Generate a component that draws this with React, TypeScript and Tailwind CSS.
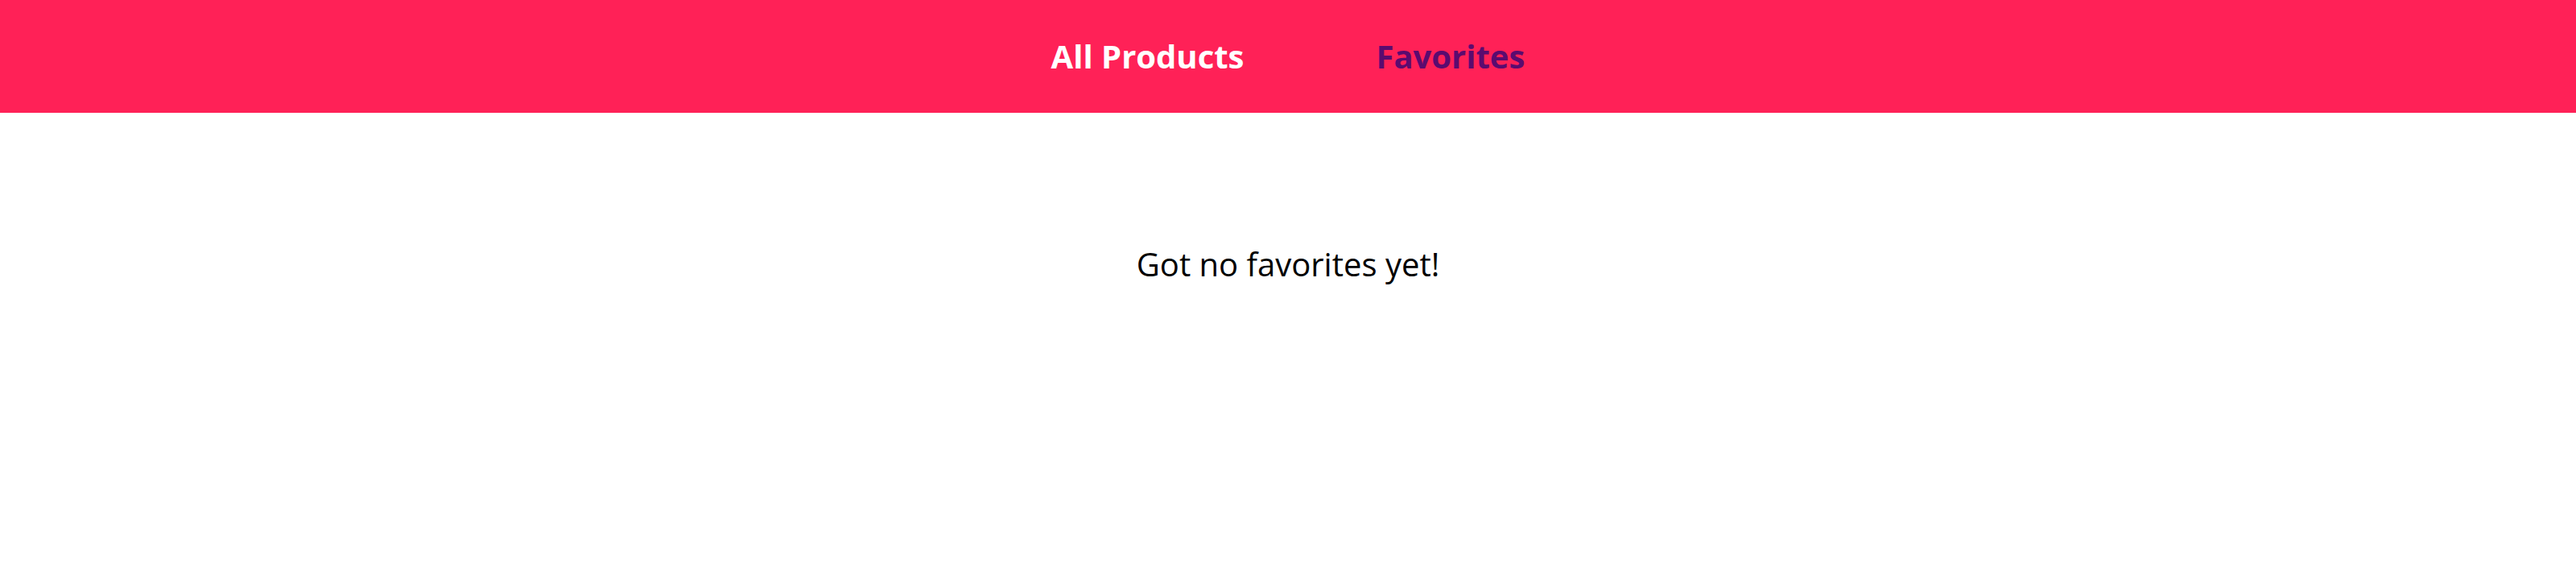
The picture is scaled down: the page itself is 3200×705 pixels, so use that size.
export default function App() {
  return (
    <div className="min-h-screen bg-white font-['Open_Sans',sans-serif]">
      <nav className="h-[140px] bg-[#ff2157] flex items-center justify-center gap-[164px]">
        <a href="#" className="text-[40px] font-bold text-white">
          All Products
        </a>
        <a href="#" className="text-[40px] font-bold text-[#5b0b6f]">
          Favorites
        </a>
      </nav>
      <main className="pt-[158px] text-center">
        <p className="text-[40px] text-black">Got no favorites yet!</p>
      </main>
    </div>
  );
}
